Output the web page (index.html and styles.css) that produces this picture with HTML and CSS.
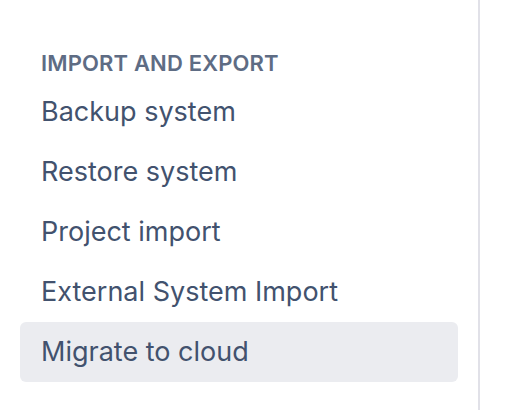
FILE: index.html
```html
<!DOCTYPE html>
<html>
<head>
<meta charset="utf-8">
<link rel="stylesheet" href="styles.css">
</head>
<body>
<nav class="sidebar">
  <div class="group">
    <h2 class="group-title">Import and export</h2>
    <ul class="menu">
      <li class="item">Backup system</li>
      <li class="item">Restore system</li>
      <li class="item">Project import</li>
      <li class="item">External System Import</li>
      <li class="item selected">Migrate to cloud</li>
    </ul>
  </div>
</nav>
</body>
</html>
```
FILE: styles.css
```css
html, body {
  margin: 0;
  padding: 0;
  background: #fff;
  height: 100%;
}
body {
  font-family: Inter, "Noto Sans", sans-serif;
}
.sidebar {
  box-sizing: border-box;
  width: 480px;
  height: 410px;
  border-right: 2px solid #E1E1E8;
  padding: 47px 20px 0 20px;
}
.group-title {
  margin: 0 0 3px 0;
  padding-left: 21px;
  font-size: 22px;
  line-height: 32px;
  font-weight: 600;
  letter-spacing: 0.15px;
  text-transform: uppercase;
  color: #5E6C84;
}
.menu {
  list-style: none;
  margin: 0;
  padding: 0;
}
.item {
  padding-left: 21px;
  height: 60px;
  font-size: 27px;
  line-height: 60px;
  color: #42526E;
  border-radius: 6px;
}
.item.selected {
  background: #EBECF0;
}
```
